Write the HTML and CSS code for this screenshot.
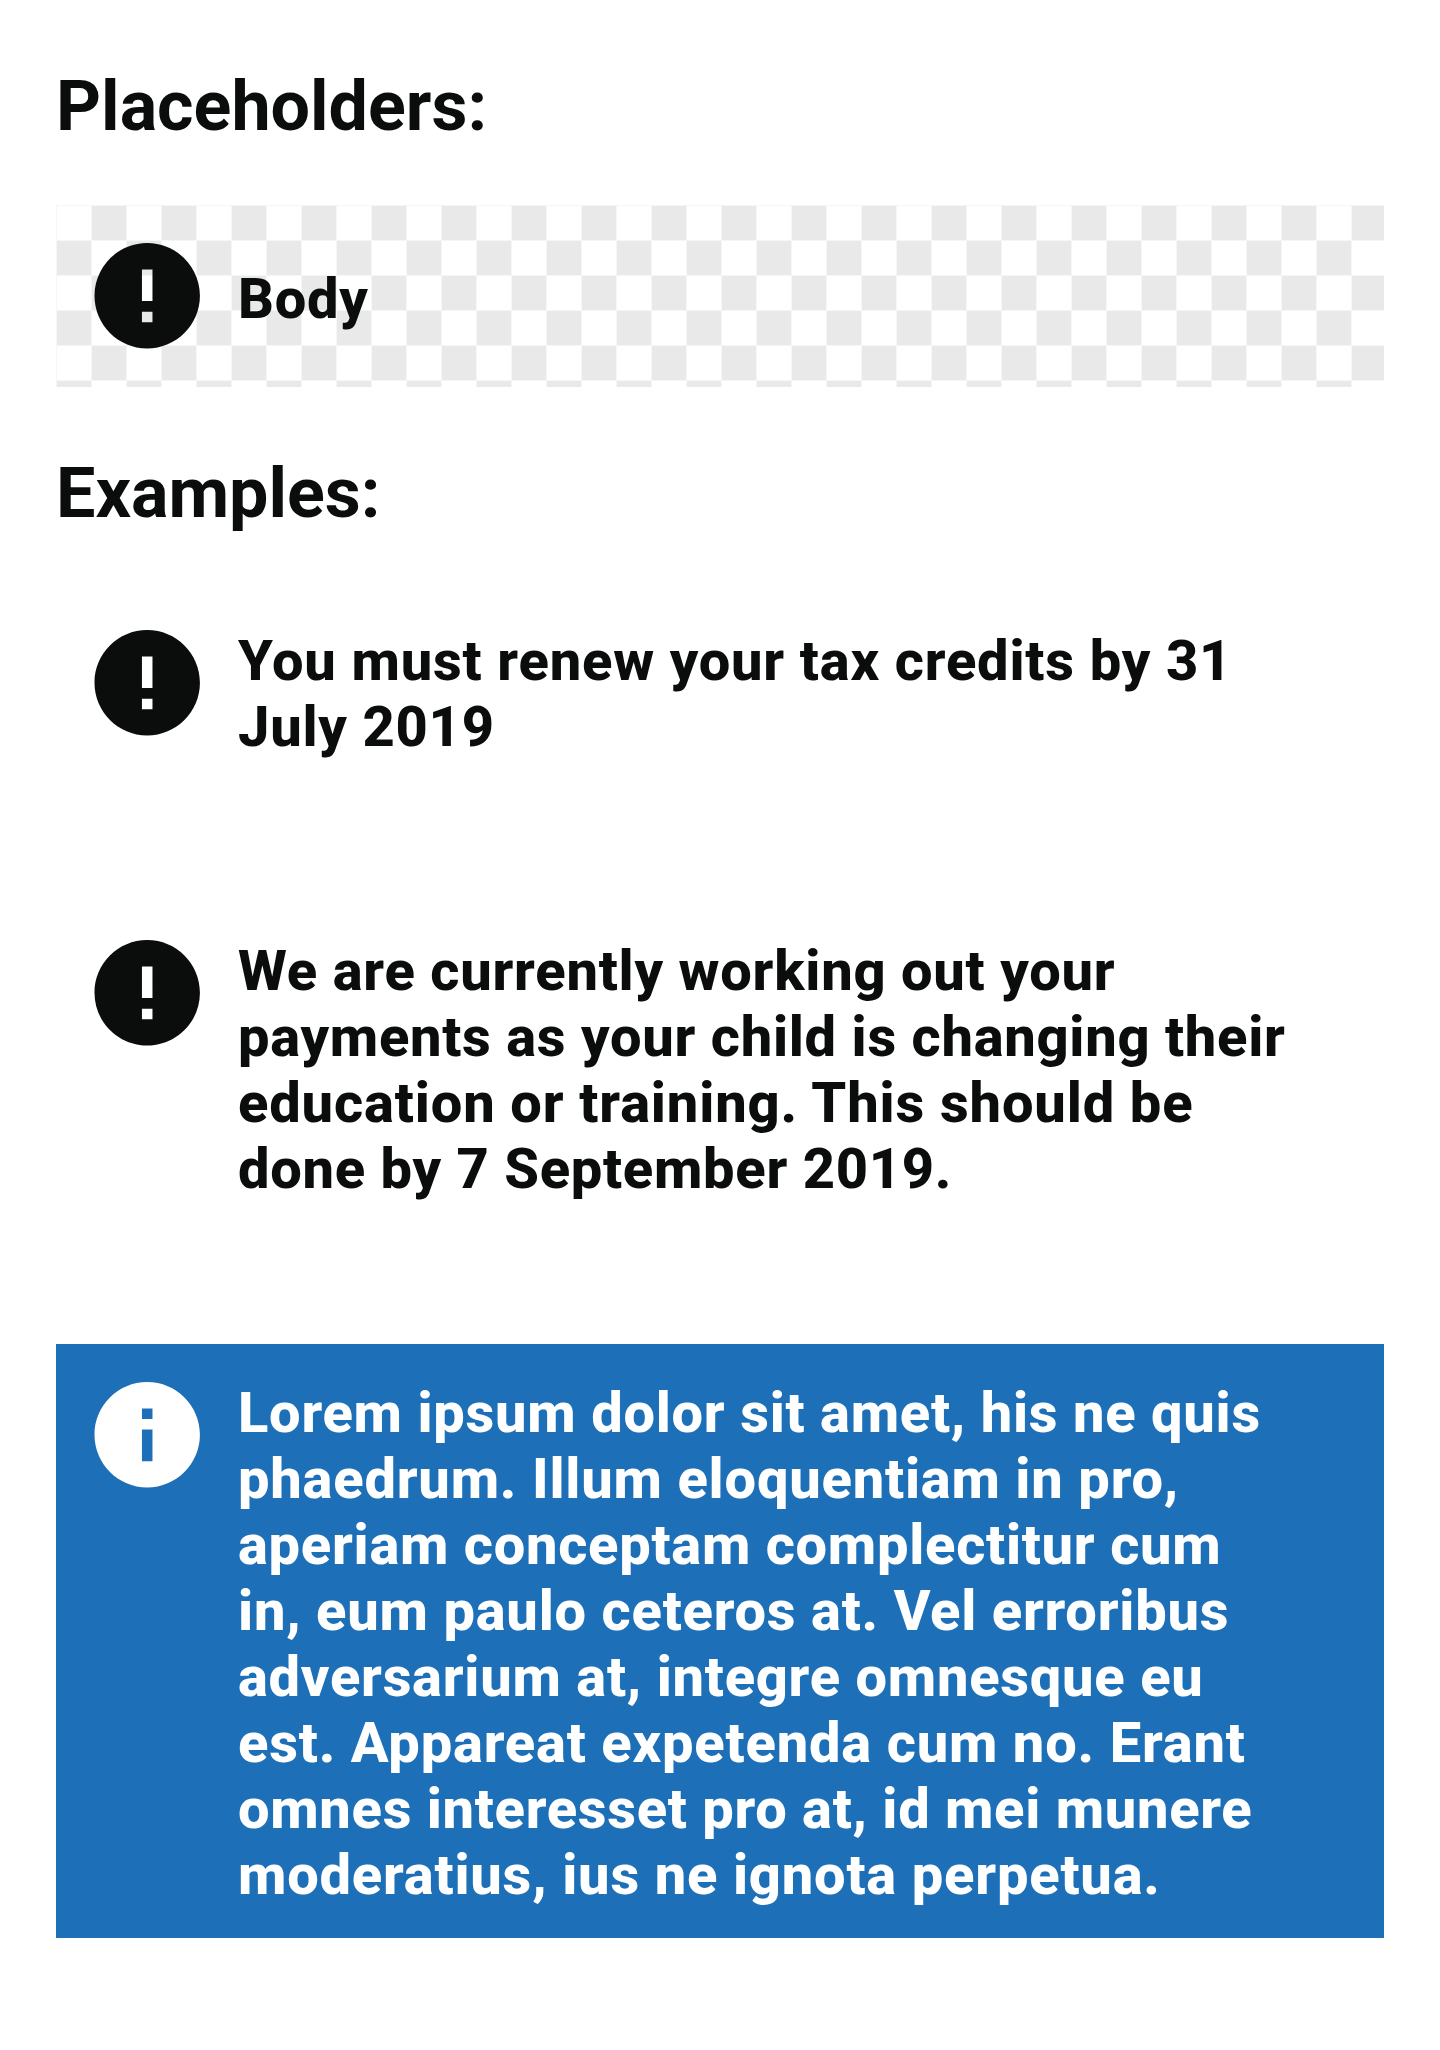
FILE: index.html
```html
<!DOCTYPE html>
<html lang="en">
<head>
<meta charset="utf-8">
<title>Information message</title>
<link rel="stylesheet" href="styles.css">
</head>
<body>
<main>
  <h1 class="heading">Placeholders:</h1>
  <section class="message message--placeholder">
    <svg class="icon" viewBox="1.905 1.98 20.11 20.11"><path d="M12 2C6.48 2 2 6.48 2 12s4.48 10 10 10 10-4.48 10-10S17.52 2 12 2zm1 15h-2v-2h2v2zm0-4h-2V7h2v6z"/></svg>
    <p class="text"><span class="line">Body</span></p>
  </section>
  <h1 class="heading heading--examples">Examples:</h1>
  <section class="message message--short">
    <svg class="icon" viewBox="1.905 1.98 20.11 20.11"><path d="M12 2C6.48 2 2 6.48 2 12s4.48 10 10 10 10-4.48 10-10S17.52 2 12 2zm1 15h-2v-2h2v2zm0-4h-2V7h2v6z"/></svg>
    <p class="text"><span class="line">You must renew your tax credits by 31</span> <span class="line">July 2019</span></p>
  </section>
  <section class="message message--long">
    <svg class="icon" viewBox="1.905 1.98 20.11 20.11"><path d="M12 2C6.48 2 2 6.48 2 12s4.48 10 10 10 10-4.48 10-10S17.52 2 12 2zm1 15h-2v-2h2v2zm0-4h-2V7h2v6z"/></svg>
    <p class="text"><span class="line">We are currently working out your</span> <span class="line">payments as your child is changing their</span> <span class="line">education or training. This should be</span> <span class="line">done by 7 September 2019.</span></p>
  </section>
  <section class="message message--info">
    <svg class="icon" viewBox="1.905 1.98 20.11 20.11"><path d="M12 2C6.48 2 2 6.48 2 12s4.48 10 10 10 10-4.48 10-10S17.52 2 12 2zm1 15h-2v-6h2v6zm0-8h-2V7h2v2z"/></svg>
    <p class="text"><span class="line">Lorem ipsum dolor sit amet, his ne quis</span> <span class="line">phaedrum. Illum eloquentiam in pro,</span> <span class="line">aperiam conceptam complectitur cum</span> <span class="line">in, eum paulo ceteros at. Vel erroribus</span> <span class="line">adversarium at, integre omnesque eu</span> <span class="line">est. Appareat expetenda cum no. Erant</span> <span class="line">omnes interesset pro at, id mei munere</span> <span class="line">moderatius, ius ne ignota perpetua.</span></p>
  </section>
</main>
</body>
</html>
```
FILE: styles.css
```css
body {
  margin: 0;
  background: #fff;
  color: #0b0c0c;
  font-family: Roboto, sans-serif;
}
main { padding: 65px 56px 112px; }
.heading {
  margin: 0;
  height: 140px;
  font-size: 70px;
  line-height: 82px;
  font-weight: 700;
}
.heading--examples { margin-top: 65px; }
.message {
  display: flex;
  gap: 38px;
  box-sizing: border-box;
  padding: 38px 38px 0;
}
.icon {
  flex: none;
  width: 106px;
  height: 106px;
  fill: currentColor;
}
.text {
  margin: -2px 0 0;
  font-size: 56px;
  line-height: 66px;
  font-weight: 800;
  letter-spacing: 0.777px;
  white-space: nowrap;
}
.line { display: block; }
.message--placeholder {
  height: 182px;
  background:
    repeating-linear-gradient(90deg, #f6f6f6 0 1px, transparent 1px 35px),
    repeating-linear-gradient(#f6f6f6 0 1px, transparent 1px 35px),
    repeating-conic-gradient(#e9e9e9 0 25%, #fff 0 50%) 0 0 / 70px 70px;
}
.message--placeholder .text { margin-top: 23px; }
.message--short { height: 310px; }
.message--long { height: 442px; }
.message--info {
  height: 594px;
  background: #1d70b8;
  color: #fff;
}

.message--short .line:nth-child(1) { letter-spacing: 0.827px; }
.message--long .line:nth-child(2) { letter-spacing: 0.739px; }
.message--long .line:nth-child(3) { letter-spacing: 0.869px; }
.message--long .line:nth-child(4) { letter-spacing: 0.727px; }
.message--info .line:nth-child(1) { letter-spacing: 0.751px; }
.message--info .line:nth-child(2) { letter-spacing: 0.795px; }
.message--info .line:nth-child(3) { letter-spacing: 0.734px; }
.message--info .line:nth-child(5) { letter-spacing: 0.751px; }
.message--info .line:nth-child(6) { letter-spacing: 0.805px; }
.message--info .line:nth-child(7) { letter-spacing: 0.709px; }
.message--info .line:nth-child(8) { letter-spacing: 0.803px; }
```
